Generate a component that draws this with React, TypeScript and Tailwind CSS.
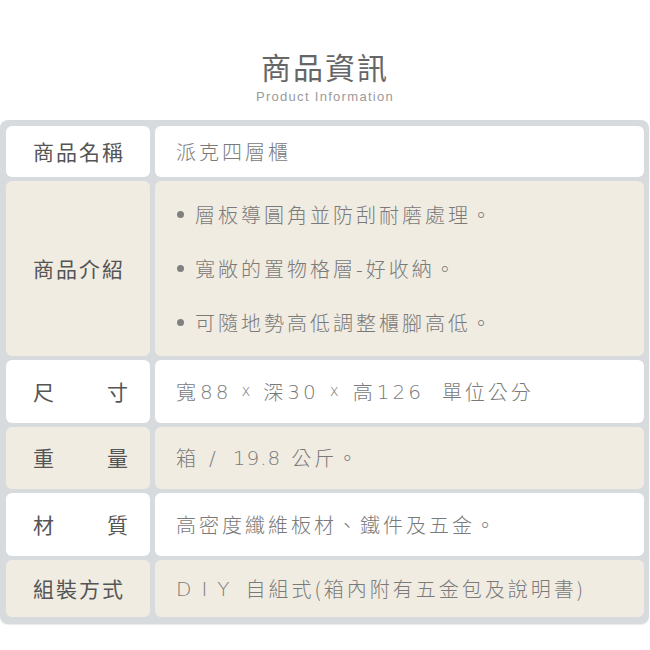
import React from 'react';

const font = { fontFamily: '"Noto Sans CJK TC", "Noto Sans", sans-serif' };
const latin = { fontFamily: '"DejaVu Sans", "Noto Sans CJK TC", sans-serif' };

type Row = {
  label: string[];
  height: string;
  tone: 'white' | 'beige';
  value: React.ReactNode;
};

const features = [
  '層板導圓角並防刮耐磨處理。',
  '寬敞的置物格層-好收納。',
  '可隨地勢高低調整櫃腳高低。',
];

const rows: Row[] = [
  { label: ['商品名稱'], height: 'h-[51px]', tone: 'white', value: '派克四層櫃' },
  {
    label: ['商品介紹'],
    height: 'h-[175px]',
    tone: 'beige',
    value: (
      <ul className="flex flex-col gap-[24px]">
        {features.map((f) => (
          <li key={f} className="flex items-center">
            <span className="w-[7px] h-[7px] rounded-full bg-[#808080] ml-[1px] mr-[11px]" />
            <span>{f}</span>
          </li>
        ))}
      </ul>
    ),
  },
  {
    label: ['尺', '寸'],
    height: 'h-[63px]',
    tone: 'white',
    value: (
      <span className="flex items-center whitespace-nowrap">
        寬<span style={latin} className="font-extralight tracking-[3px] ml-[1px]">88</span>
        <span style={latin} className="font-extralight text-[15px] mx-[10px]">x</span>
        深<span style={latin} className="font-extralight tracking-[3px] ml-[1px]">30</span>
        <span style={latin} className="font-extralight text-[15px] mx-[11px]">x</span>
        高<span style={latin} className="font-extralight tracking-[3px] ml-[1px]">126</span>
        <span className="ml-[18px]">單位公分</span>
      </span>
    ),
  },
  {
    label: ['重', '量'],
    height: 'h-[62px]',
    tone: 'beige',
    value: (
      <span className="flex items-center whitespace-nowrap">
        箱<span style={latin} className="font-extralight ml-[10px] mr-[14px]">/</span>
        <span style={latin} className="font-extralight tracking-[1px] mr-[10px]">19.8</span>公斤。
      </span>
    ),
  },
  { label: ['材', '質'], height: 'h-[63px]', tone: 'white', value: '高密度纖維板材、鐵件及五金。' },
  {
    label: ['組裝方式'],
    height: 'h-[57px]',
    tone: 'beige',
    value: (
      <span className="flex items-center whitespace-nowrap">
        <span style={latin} className="tracking-[10px] font-extralight">DIY</span>
        <span className="ml-[6px]">自組式(箱內附有五金包及說明書)</span>
      </span>
    ),
  },
];

export default function App() {
  return (
    <div className="w-[650px] h-[650px] bg-white" style={font}>
      {/* Heading */}
      <div className="pt-[46px] flex flex-col items-center">
        <h1 className="text-[30px] leading-[40px] tracking-[2px] text-[#666666]">商品資訊</h1>
        <p
          className="text-[13px] leading-[16px] tracking-[1.3px] text-[#9a9a9a] mt-[3px]"
          style={{ fontFamily: '"Liberation Sans", sans-serif' }}
        >
          Product Information
        </p>
      </div>

      {/* Spec table */}
      <div className="mt-[15px] w-[649px] h-[504px] rounded-[8px] bg-[#d7dbde] pt-[6px] pl-[6px] pr-[5px] pb-[5px] shadow-[0_1px_1px_rgba(0,0,0,0.08)]">
        <div className="grid grid-cols-[144px_1fr] gap-x-[5px] gap-y-[4px]">
          {rows.map((row, i) => {
            const bg = row.tone === 'white' ? 'bg-white' : 'bg-[#f0ece2]';
            return (
              <React.Fragment key={i}>
                <div
                  className={`${row.height} ${bg} rounded-[6px] pl-[27px] pr-[22px] flex items-center whitespace-nowrap text-[21px] text-[#555555] ${
                    row.label.length > 1 ? 'justify-between' : 'justify-start tracking-[2px]'
                  }`}
                >
                  {row.label.map((l) => (
                    <span key={l}>{l}</span>
                  ))}
                </div>
                <div
                  className={`${row.height} ${bg} rounded-[6px] pl-[21px] flex items-center whitespace-nowrap text-[20px] font-light tracking-[3px] text-[#7a7a7a]`}
                >
                  {row.value}
                </div>
              </React.Fragment>
            );
          })}
        </div>
      </div>
    </div>
  );
}
